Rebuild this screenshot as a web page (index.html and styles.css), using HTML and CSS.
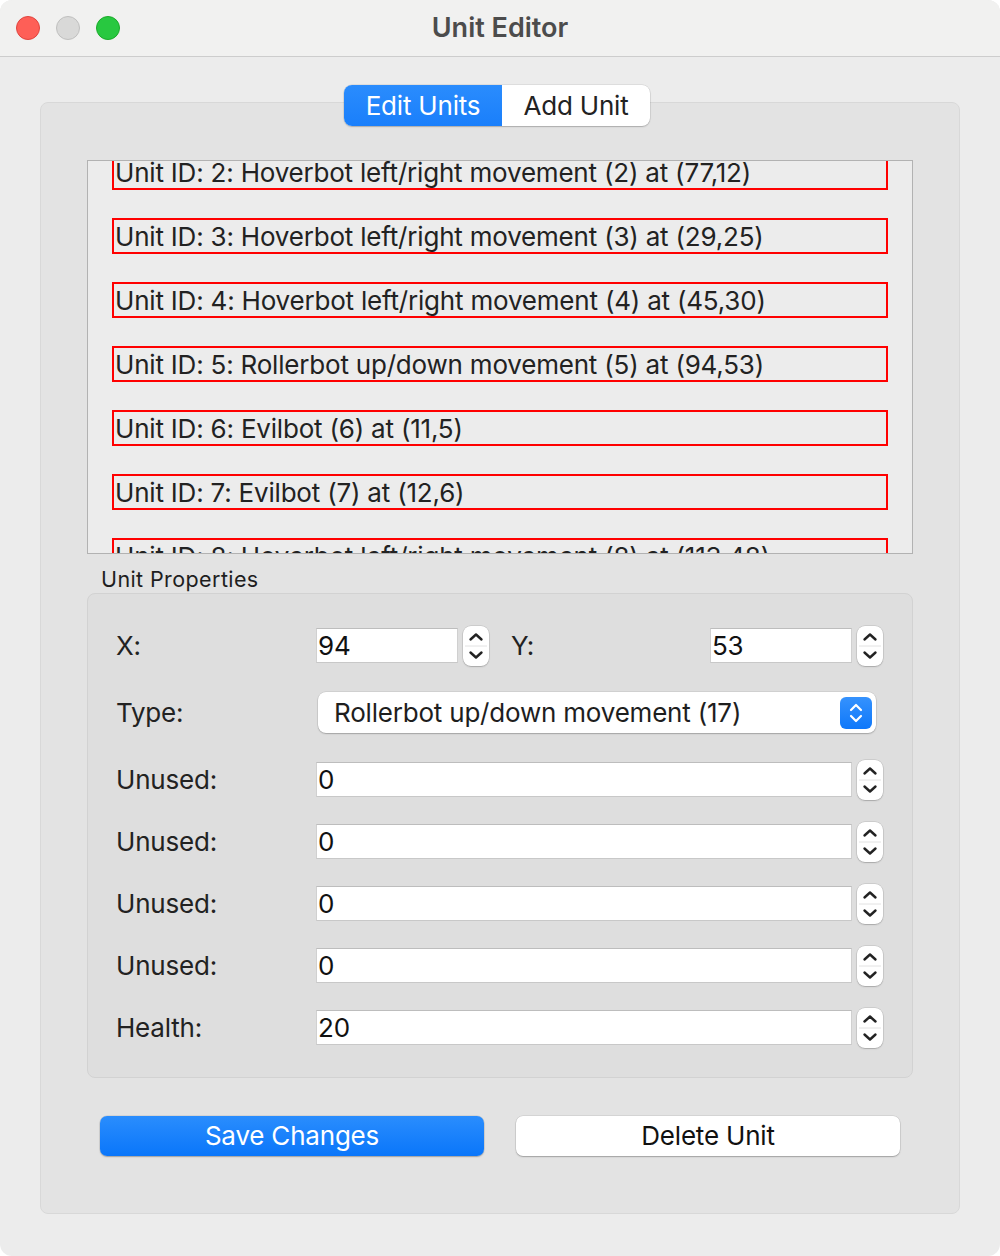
FILE: index.html
```html
<!DOCTYPE html>
<html>
<head>
<meta charset="utf-8">
<link rel="stylesheet" href="styles.css">
</head>
<body>
<div class="window">
  <div class="titlebar">
    <div class="lights">
      <span class="light red"></span>
      <span class="light gray"></span>
      <span class="light green"></span>
    </div>
    <div class="title">Unit Editor</div>
  </div>
  <div class="content">
    <div class="segmented">
      <div class="seg active">Edit Units</div>
      <div class="seg">Add Unit</div>
    </div>
    <div class="group">
      <div class="list">
        <div class="items">
          <div class="item">Unit ID: 2: Hoverbot left/right movement (2) at (77,12)</div>
          <div class="item">Unit ID: 3: Hoverbot left/right movement (3) at (29,25)</div>
          <div class="item">Unit ID: 4: Hoverbot left/right movement (4) at (45,30)</div>
          <div class="item">Unit ID: 5: Rollerbot up/down movement (5) at (94,53)</div>
          <div class="item">Unit ID: 6: Evilbot (6) at (11,5)</div>
          <div class="item">Unit ID: 7: Evilbot (7) at (12,6)</div>
          <div class="item">Unit ID: 8: Hoverbot left/right movement (8) at (113,48)</div>
        </div>
      </div>
      <div class="props-label">Unit Properties</div>
      <div class="props">
        <div class="row row-xy">
          <div class="label">X:</div>
          <div class="field short">
            <div class="input">94</div>
            <div class="stepper"><svg width="26" height="40" viewBox="0 0 26 40"><line x1="2" y1="20" x2="24" y2="20" stroke="#e2e2e2" stroke-width="1"/><path d="M7.5 13.5 L13 8.5 L18.5 13.5" fill="none" stroke="#222" stroke-width="2.4" stroke-linecap="round" stroke-linejoin="round"/><path d="M7.5 26.5 L13 31.5 L18.5 26.5" fill="none" stroke="#222" stroke-width="2.4" stroke-linecap="round" stroke-linejoin="round"/></svg></div>
          </div>
          <div class="label ylabel">Y:</div>
          <div class="field short">
            <div class="input">53</div>
            <div class="stepper"><svg width="26" height="40" viewBox="0 0 26 40"><line x1="2" y1="20" x2="24" y2="20" stroke="#e2e2e2" stroke-width="1"/><path d="M7.5 13.5 L13 8.5 L18.5 13.5" fill="none" stroke="#222" stroke-width="2.4" stroke-linecap="round" stroke-linejoin="round"/><path d="M7.5 26.5 L13 31.5 L18.5 26.5" fill="none" stroke="#222" stroke-width="2.4" stroke-linecap="round" stroke-linejoin="round"/></svg></div>
          </div>
        </div>
        <div class="row row-type">
          <div class="label">Type:</div>
          <div class="popup">
            <span class="popup-text">Rollerbot up/down movement (17)</span>
            <span class="popup-btn"><svg width="32" height="32" viewBox="0 0 32 32"><path d="M11 13 L16 8 L21 13" fill="none" stroke="#fff" stroke-width="2.2" stroke-linecap="round" stroke-linejoin="round"/><path d="M11 19 L16 24 L21 19" fill="none" stroke="#fff" stroke-width="2.2" stroke-linecap="round" stroke-linejoin="round"/></svg></span>
          </div>
        </div>
        <div class="row">
          <div class="label">Unused:</div>
          <div class="field wide">
            <div class="input">0</div>
            <div class="stepper"><svg width="26" height="40" viewBox="0 0 26 40"><line x1="2" y1="20" x2="24" y2="20" stroke="#e2e2e2" stroke-width="1"/><path d="M7.5 13.5 L13 8.5 L18.5 13.5" fill="none" stroke="#222" stroke-width="2.4" stroke-linecap="round" stroke-linejoin="round"/><path d="M7.5 26.5 L13 31.5 L18.5 26.5" fill="none" stroke="#222" stroke-width="2.4" stroke-linecap="round" stroke-linejoin="round"/></svg></div>
          </div>
        </div>
        <div class="row">
          <div class="label">Unused:</div>
          <div class="field wide">
            <div class="input">0</div>
            <div class="stepper"><svg width="26" height="40" viewBox="0 0 26 40"><line x1="2" y1="20" x2="24" y2="20" stroke="#e2e2e2" stroke-width="1"/><path d="M7.5 13.5 L13 8.5 L18.5 13.5" fill="none" stroke="#222" stroke-width="2.4" stroke-linecap="round" stroke-linejoin="round"/><path d="M7.5 26.5 L13 31.5 L18.5 26.5" fill="none" stroke="#222" stroke-width="2.4" stroke-linecap="round" stroke-linejoin="round"/></svg></div>
          </div>
        </div>
        <div class="row">
          <div class="label">Unused:</div>
          <div class="field wide">
            <div class="input">0</div>
            <div class="stepper"><svg width="26" height="40" viewBox="0 0 26 40"><line x1="2" y1="20" x2="24" y2="20" stroke="#e2e2e2" stroke-width="1"/><path d="M7.5 13.5 L13 8.5 L18.5 13.5" fill="none" stroke="#222" stroke-width="2.4" stroke-linecap="round" stroke-linejoin="round"/><path d="M7.5 26.5 L13 31.5 L18.5 26.5" fill="none" stroke="#222" stroke-width="2.4" stroke-linecap="round" stroke-linejoin="round"/></svg></div>
          </div>
        </div>
        <div class="row">
          <div class="label">Unused:</div>
          <div class="field wide">
            <div class="input">0</div>
            <div class="stepper"><svg width="26" height="40" viewBox="0 0 26 40"><line x1="2" y1="20" x2="24" y2="20" stroke="#e2e2e2" stroke-width="1"/><path d="M7.5 13.5 L13 8.5 L18.5 13.5" fill="none" stroke="#222" stroke-width="2.4" stroke-linecap="round" stroke-linejoin="round"/><path d="M7.5 26.5 L13 31.5 L18.5 26.5" fill="none" stroke="#222" stroke-width="2.4" stroke-linecap="round" stroke-linejoin="round"/></svg></div>
          </div>
        </div>
        <div class="row">
          <div class="label">Health:</div>
          <div class="field wide">
            <div class="input">20</div>
            <div class="stepper"><svg width="26" height="40" viewBox="0 0 26 40"><line x1="2" y1="20" x2="24" y2="20" stroke="#e2e2e2" stroke-width="1"/><path d="M7.5 13.5 L13 8.5 L18.5 13.5" fill="none" stroke="#222" stroke-width="2.4" stroke-linecap="round" stroke-linejoin="round"/><path d="M7.5 26.5 L13 31.5 L18.5 26.5" fill="none" stroke="#222" stroke-width="2.4" stroke-linecap="round" stroke-linejoin="round"/></svg></div>
          </div>
        </div>
      </div>
      <div class="buttons">
        <div class="btn primary">Save Changes</div>
        <div class="btn">Delete Unit</div>
      </div>
    </div>
  </div>
</div>
</body>
</html>
```
FILE: styles.css
```css
* { box-sizing: border-box; }
html, body { margin: 0; padding: 0; background: #ffffff; }
body {
  font-family: Inter, "Noto Sans", "Liberation Sans", sans-serif;
  color: #222;
}
.window {
  width: 1000px;
  height: 1256px;
  background: #ececec;
  border-radius: 12px;
  overflow: hidden;
  display: flex;
  flex-direction: column;
}
.titlebar {
  height: 57px;
  flex: none;
  background: #f1f1f0;
  border-bottom: 1px solid #cdcdcd;
  display: flex;
  align-items: center;
  position: relative;
}
.lights {
  display: flex;
  gap: 16px;
  padding-left: 16px;
  padding-bottom: 1px;
}
.light {
  width: 24px;
  height: 24px;
  border-radius: 50%;
  display: block;
}
.light.red { background: #fe5f57; border: 1px solid #e0443e; }
.light.gray { background: #d9d9d8; border: 1px solid #c0c0bf; }
.light.green { background: #28c840; border: 1px solid #1aab29; }
.title {
  position: absolute;
  left: 0; right: 0; top: 0;
  line-height: 55px;
  text-align: center;
  font-size: 27px;
  font-weight: 600;
  color: #4c4c4c;
}
.content {
  display: flex;
  flex-direction: column;
  align-items: center;
  padding: 28px 40px 0 40px;
}
.segmented {
  position: relative;
  z-index: 1;
  display: flex;
  height: 41px;
  border-radius: 8px;
  background: #fff;
  box-shadow: 0 0 0 0.5px rgba(0,0,0,0.12), 0 1px 1.5px rgba(0,0,0,0.2);
  overflow: hidden;
  margin-bottom: -24px;
  margin-right: 6px;
}
.seg {
  font-size: 26px;
  letter-spacing: -0.2px;
  line-height: 41px;
  text-align: center;
  color: #222;
}
.seg.active {
  width: 158px;
  background: linear-gradient(#2a8cfd, #1a7ffb);
  color: #fff;
}
.seg:not(.active) { width: 148px; }
.group {
  width: 920px;
  height: 1112px;
  background: #e3e3e3;
  border: 1px solid #d8d8d8;
  border-radius: 8px;
  padding: 57px 46px 0 46px;
  display: flex;
  flex-direction: column;
}
.list {
  height: 394px;
  background: #ececec;
  border: 1px solid #b2b2b2;
  overflow: hidden;
}
.items {
  margin-top: -7px;
  padding-left: 24px;
  display: flex;
  flex-direction: column;
  gap: 28px;
}
.item {
  width: 776px;
  height: 36px;
  border: 2px solid #ff0000;
  font-size: 26px;
  letter-spacing: -0.2px;
  line-height: 32px;
  padding-left: 1px;
  padding-top: 1px;
  color: #222;
  white-space: nowrap;
  overflow: hidden;
}
.props-label {
  font-size: 21.5px;
  letter-spacing: 0.4px;
  line-height: 24px;
  color: #1e1e1e;
  padding-left: 14px;
  margin-top: 13px;
  margin-bottom: 2px;
}
.props {
  height: 485px;
  background: #dedede;
  border: 1px solid #d2d2d2;
  border-radius: 8px;
  padding: 31px 29px 0 28px;
  display: flex;
  flex-direction: column;
  gap: 21px;
}
.row {
  display: flex;
  align-items: center;
  height: 41px;
}
.row-xy, .row-type { margin-bottom: 5px; }
.label {
  width: 200px;
  flex: none;
  font-size: 26px;
  letter-spacing: -0.2px;
  color: #222;
}
.ylabel { width: 199px; margin-left: 22px; }
.field {
  display: flex;
  align-items: center;
  gap: 5px;
}
.field.short { width: 173px; }
.field.wide { width: 567px; }
.input {
  flex: 1;
  height: 35px;
  background: #fff;
  border-top: 1px solid #bdbdbd;
  border-left: 1px solid #d0d0d0;
  border-right: 1px solid #d0d0d0;
  border-bottom: 1px solid #c8c8c8;
  font-size: 26px;
  letter-spacing: -0.2px;
  line-height: 33px;
  padding-left: 1px;
  color: #111;
}
.stepper {
  width: 26px;
  height: 40px;
  flex: none;
  background: #fff;
  border-radius: 8px;
  box-shadow: 0 0 0 0.5px rgba(0,0,0,0.15), 0 1px 1.5px rgba(0,0,0,0.18);
  display: flex;
}
.popup {
  margin-left: 2px;
  width: 558px;
  height: 41px;
  background: #fff;
  border-radius: 8px;
  box-shadow: 0 0 0 0.5px rgba(0,0,0,0.12), 0 1px 1.5px rgba(0,0,0,0.22);
  display: flex;
  align-items: center;
  justify-content: space-between;
  padding-left: 16px;
  padding-right: 4px;
}
.popup-text { font-size: 26px; letter-spacing: -0.2px; color: #1e1e1e; }
.popup-btn {
  width: 32px;
  height: 32px;
  border-radius: 6px;
  background: linear-gradient(#3592fd, #0f78fa);
  display: flex;
}
.buttons {
  display: flex;
  gap: 32px;
  padding: 0 13px;
  margin-top: 38px;
}
.btn {
  width: 384px;
  height: 40px;
  border-radius: 7px;
  background: #fff;
  box-shadow: 0 0 0 0.5px rgba(0,0,0,0.12), 0 1px 1.5px rgba(0,0,0,0.25);
  font-size: 26px;
  letter-spacing: -0.2px;
  line-height: 40px;
  text-align: center;
  color: #111;
}
.btn.primary {
  background: linear-gradient(#2a8dfd, #0a76fa);
  color: #fff;
}
```
